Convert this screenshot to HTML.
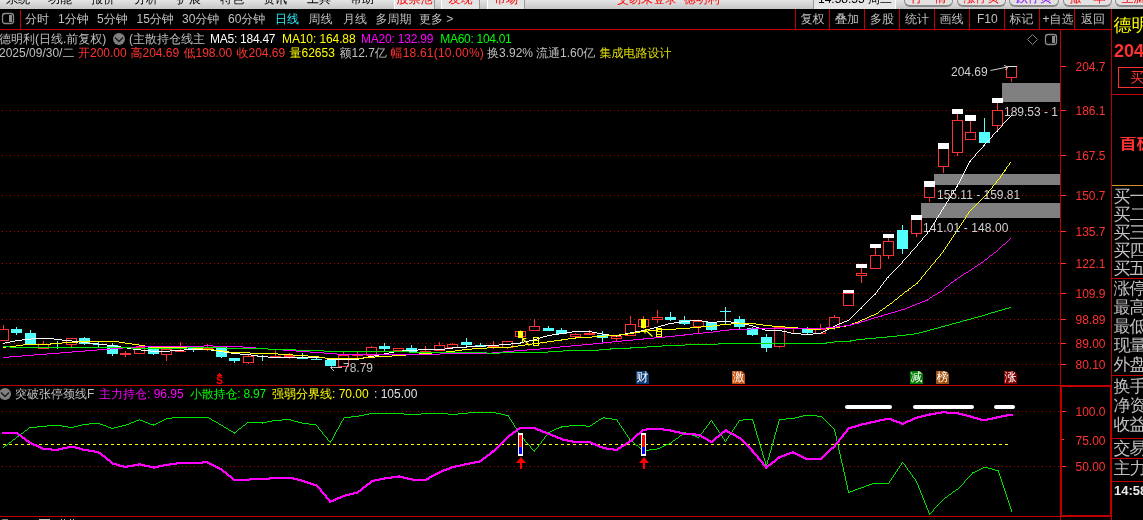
<!DOCTYPE html>
<html lang="zh-CN"><head><meta charset="utf-8"><title>德明利 日线</title>
<style>
html,body{margin:0;padding:0;background:#000;}
body{width:1143px;height:520px;overflow:hidden;position:relative;font-family:"Liberation Sans","WenQuanYi Zen Hei","Noto Sans CJK SC",sans-serif;}
svg{position:absolute;left:0;top:0;}
.txt{position:absolute;left:0;top:0;width:1143px;height:520px;overflow:hidden;will-change:transform;}
.t{position:absolute;white-space:nowrap;line-height:14px;height:14px;letter-spacing:0;}
.menu{position:absolute;left:0;top:0;width:1143px;height:9px;overflow:hidden;background:linear-gradient(#e4e4e4,#c6c6c6);}
.m{position:absolute;top:-8px;font-size:12px;line-height:14px;color:#000;white-space:nowrap;}
.tab{position:absolute;top:-8px;height:17px;box-sizing:border-box;border-left:1px solid #fff;border-right:1px solid #999;background:#e4e4e4;font-size:12px;line-height:14px;color:#f00;text-align:center;white-space:nowrap;}
.clock{position:absolute;top:-8px;height:17px;box-sizing:border-box;border-left:1px solid #999;border-right:1px solid #fff;background:#e6e6e6;font-size:12px;line-height:14px;color:#000;text-align:left;padding-left:4px;white-space:nowrap;}
.btn{position:absolute;top:-12px;height:19px;box-sizing:border-box;border:1px solid #8c8c8c;border-bottom:2px solid #888;border-radius:6px;background:#e2e2e2;font-size:12px;line-height:19px;text-align:center;white-space:nowrap;}
.mk{position:absolute;width:13px;height:13px;clip-path:polygon(0 0,10px 0,13px 3px,13px 13px,0 13px);font-size:12px;line-height:13px;color:#fff;text-align:center;overflow:hidden;}
</style></head><body>
<svg width="1143" height="520" viewBox="0 0 1143 520" shape-rendering="crispEdges">
<line x1="2" y1="110.5" x2="1060" y2="110.5" stroke="#b00000" stroke-width="1" stroke-dasharray="1 3"/>
<line x1="2" y1="155.5" x2="1060" y2="155.5" stroke="#b00000" stroke-width="1" stroke-dasharray="1 3"/>
<line x1="2" y1="195.5" x2="1060" y2="195.5" stroke="#b00000" stroke-width="1" stroke-dasharray="1 3"/>
<line x1="2" y1="231.5" x2="1060" y2="231.5" stroke="#b00000" stroke-width="1" stroke-dasharray="1 3"/>
<line x1="2" y1="263.5" x2="1060" y2="263.5" stroke="#b00000" stroke-width="1" stroke-dasharray="1 3"/>
<line x1="2" y1="293.5" x2="1060" y2="293.5" stroke="#b00000" stroke-width="1" stroke-dasharray="1 3"/>
<line x1="2" y1="319.5" x2="1060" y2="319.5" stroke="#b00000" stroke-width="1" stroke-dasharray="1 3"/>
<line x1="2" y1="343.5" x2="1060" y2="343.5" stroke="#b00000" stroke-width="1" stroke-dasharray="1 3"/>
<line x1="2" y1="364.5" x2="1060" y2="364.5" stroke="#b00000" stroke-width="1" stroke-dasharray="1 3"/>
<line x1="2" y1="411.5" x2="1060" y2="411.5" stroke="#b00000" stroke-width="1" stroke-dasharray="1 3"/>
<line x1="2" y1="466.5" x2="1060" y2="466.5" stroke="#b00000" stroke-width="1" stroke-dasharray="1 3"/>
<rect x="1002" y="83" width="58" height="19" fill="#808080"/>
<rect x="934" y="174" width="126" height="11" fill="#808080"/>
<rect x="921" y="203" width="139" height="15" fill="#808080"/>
<rect x="3" y="325" width="1" height="4" fill="#ff3232"/>
<rect x="-1.5" y="329.5" width="10" height="11" fill="#000" stroke="#ff3232" stroke-width="1"/>
<rect x="16" y="327" width="1" height="8" fill="#54ffff"/>
<rect x="11" y="329" width="11" height="4" fill="#54ffff"/>
<rect x="30" y="330" width="1" height="14" fill="#54ffff"/>
<rect x="25" y="333" width="11" height="11" fill="#54ffff"/>
<rect x="43" y="341" width="1" height="3" fill="#ff3232"/>
<rect x="38.5" y="344.5" width="10" height="4" fill="#000" stroke="#ff3232" stroke-width="1"/>
<rect x="57" y="341" width="1" height="8" fill="#54ffff"/>
<rect x="52" y="347" width="11" height="1" fill="#54ffff"/>
<rect x="71" y="345" width="1" height="2" fill="#ff3232"/>
<rect x="66.5" y="338.5" width="10" height="6" fill="#000" stroke="#ff3232" stroke-width="1"/>
<rect x="84" y="337" width="1" height="8" fill="#54ffff"/>
<rect x="79" y="338" width="11" height="6" fill="#54ffff"/>
<rect x="98" y="342" width="1" height="5" fill="#54ffff"/>
<rect x="93" y="344" width="11" height="1" fill="#54ffff"/>
<rect x="112" y="343" width="1" height="13" fill="#54ffff"/>
<rect x="107" y="345" width="11" height="9" fill="#54ffff"/>
<rect x="125" y="351" width="1" height="6" fill="#ff3232"/>
<rect x="120" y="353" width="11" height="2" fill="#ff3232"/>
<rect x="134.5" y="347.5" width="10" height="6" fill="#000" stroke="#ff3232" stroke-width="1"/>
<rect x="153" y="347" width="1" height="8" fill="#54ffff"/>
<rect x="148" y="347" width="11" height="7" fill="#54ffff"/>
<rect x="166" y="355" width="1" height="6" fill="#ff3232"/>
<rect x="161.5" y="349.5" width="10" height="5" fill="#000" stroke="#ff3232" stroke-width="1"/>
<rect x="180" y="342" width="1" height="10" fill="#ff3232"/>
<rect x="175" y="351" width="11" height="1" fill="#ff3232"/>
<rect x="193" y="346" width="1" height="6" fill="#54ffff"/>
<rect x="188" y="348" width="11" height="1" fill="#54ffff"/>
<rect x="207" y="344" width="1" height="7" fill="#ff3232"/>
<rect x="202" y="348" width="11" height="2" fill="#ff3232"/>
<rect x="221" y="347" width="1" height="11" fill="#54ffff"/>
<rect x="216" y="347" width="11" height="10" fill="#54ffff"/>
<rect x="234" y="358" width="1" height="5" fill="#54ffff"/>
<rect x="229" y="358" width="11" height="3" fill="#54ffff"/>
<rect x="248" y="355" width="1" height="1" fill="#ff3232"/>
<rect x="248" y="363" width="1" height="1" fill="#ff3232"/>
<rect x="243.5" y="356.5" width="10" height="6" fill="#000" stroke="#ff3232" stroke-width="1"/>
<rect x="262" y="355" width="1" height="6" fill="#54ffff"/>
<rect x="257" y="356" width="11" height="1" fill="#54ffff"/>
<rect x="275" y="350" width="1" height="7" fill="#ff3232"/>
<rect x="270" y="356" width="11" height="1" fill="#ff3232"/>
<rect x="289" y="353" width="1" height="6" fill="#ff3232"/>
<rect x="284" y="355" width="11" height="2" fill="#ff3232"/>
<rect x="302" y="353" width="1" height="6" fill="#54ffff"/>
<rect x="297" y="358" width="11" height="1" fill="#54ffff"/>
<rect x="316" y="357" width="1" height="3" fill="#54ffff"/>
<rect x="311" y="359" width="11" height="1" fill="#54ffff"/>
<rect x="330" y="360" width="1" height="6" fill="#54ffff"/>
<rect x="325" y="360" width="11" height="6" fill="#54ffff"/>
<rect x="343" y="352" width="1" height="3" fill="#ff3232"/>
<rect x="338.5" y="355.5" width="10" height="11" fill="#000" stroke="#ff3232" stroke-width="1"/>
<rect x="357" y="352" width="1" height="6" fill="#ff3232"/>
<rect x="352" y="355" width="11" height="1" fill="#ff3232"/>
<rect x="371" y="346" width="1" height="1" fill="#ff3232"/>
<rect x="366.5" y="347.5" width="10" height="8" fill="#000" stroke="#ff3232" stroke-width="1"/>
<rect x="384" y="343" width="1" height="8" fill="#54ffff"/>
<rect x="379" y="346" width="11" height="3" fill="#54ffff"/>
<rect x="393.5" y="348.5" width="10" height="2" fill="#000" stroke="#ff3232" stroke-width="1"/>
<rect x="411" y="345" width="1" height="7" fill="#54ffff"/>
<rect x="406" y="348" width="11" height="4" fill="#54ffff"/>
<rect x="425" y="346" width="1" height="5" fill="#ff3232"/>
<rect x="420.5" y="351.5" width="10" height="2" fill="#000" stroke="#ff3232" stroke-width="1"/>
<rect x="439" y="342" width="1" height="3" fill="#ff3232"/>
<rect x="434.5" y="345.5" width="10" height="5" fill="#000" stroke="#ff3232" stroke-width="1"/>
<rect x="452" y="343" width="1" height="1" fill="#ff3232"/>
<rect x="447.5" y="344.5" width="10" height="3" fill="#000" stroke="#ff3232" stroke-width="1"/>
<rect x="466" y="338" width="1" height="9" fill="#54ffff"/>
<rect x="461" y="342" width="11" height="3" fill="#54ffff"/>
<rect x="480" y="343" width="1" height="4" fill="#54ffff"/>
<rect x="475" y="345" width="11" height="2" fill="#54ffff"/>
<rect x="493" y="341" width="1" height="8" fill="#ff3232"/>
<rect x="488" y="346" width="11" height="1" fill="#ff3232"/>
<rect x="507" y="348" width="1" height="1" fill="#ff3232"/>
<rect x="502.5" y="341.5" width="10" height="6" fill="#000" stroke="#ff3232" stroke-width="1"/>
<rect x="520" y="330" width="1" height="1" fill="#ff3232"/>
<rect x="520" y="337" width="1" height="1" fill="#ff3232"/>
<rect x="515.5" y="331.5" width="10" height="5" fill="#000" stroke="#ff3232" stroke-width="1"/>
<rect x="518" y="331" width="5" height="7" fill="#ffff00"/>
<rect x="534" y="319" width="1" height="7" fill="#ff3232"/>
<rect x="529.5" y="326.5" width="10" height="4" fill="#000" stroke="#ff3232" stroke-width="1"/>
<rect x="548" y="326" width="1" height="5" fill="#54ffff"/>
<rect x="543" y="328" width="11" height="3" fill="#54ffff"/>
<rect x="561" y="328" width="1" height="6" fill="#54ffff"/>
<rect x="556" y="330" width="11" height="4" fill="#54ffff"/>
<rect x="575" y="333" width="1" height="1" fill="#ff3232"/>
<rect x="575" y="337" width="1" height="1" fill="#ff3232"/>
<rect x="570.5" y="334.5" width="10" height="2" fill="#000" stroke="#ff3232" stroke-width="1"/>
<rect x="589" y="330" width="1" height="5" fill="#ff3232"/>
<rect x="584" y="333" width="11" height="2" fill="#ff3232"/>
<rect x="602" y="331" width="1" height="11" fill="#54ffff"/>
<rect x="597" y="335" width="11" height="3" fill="#54ffff"/>
<rect x="616" y="339" width="1" height="2" fill="#ff3232"/>
<rect x="611.5" y="336.5" width="10" height="2" fill="#000" stroke="#ff3232" stroke-width="1"/>
<rect x="630" y="316" width="1" height="8" fill="#ff3232"/>
<rect x="625.5" y="324.5" width="10" height="11" fill="#000" stroke="#ff3232" stroke-width="1"/>
<rect x="643" y="316" width="1" height="3" fill="#ff3232"/>
<rect x="643" y="327" width="1" height="2" fill="#ff3232"/>
<rect x="638.5" y="319.5" width="10" height="7" fill="#000" stroke="#ff3232" stroke-width="1"/>
<rect x="641" y="319" width="5" height="9" fill="#ffff00"/>
<rect x="657" y="310" width="1" height="7" fill="#ff3232"/>
<rect x="657" y="320" width="1" height="3" fill="#ff3232"/>
<rect x="652.5" y="317.5" width="10" height="2" fill="#000" stroke="#ff3232" stroke-width="1"/>
<rect x="670" y="312" width="1" height="9" fill="#54ffff"/>
<rect x="665" y="317" width="11" height="3" fill="#54ffff"/>
<rect x="684" y="316" width="1" height="9" fill="#54ffff"/>
<rect x="679" y="320" width="11" height="4" fill="#54ffff"/>
<rect x="698" y="327" width="1" height="6" fill="#ff3232"/>
<rect x="693.5" y="321.5" width="10" height="5" fill="#000" stroke="#ff3232" stroke-width="1"/>
<rect x="711" y="322" width="1" height="9" fill="#54ffff"/>
<rect x="706" y="322" width="11" height="8" fill="#54ffff"/>
<rect x="725" y="307" width="1" height="17" fill="#54ffff"/>
<rect x="720" y="311" width="11" height="1" fill="#54ffff"/>
<rect x="739" y="316" width="1" height="13" fill="#54ffff"/>
<rect x="734" y="319" width="11" height="8" fill="#54ffff"/>
<rect x="752" y="327" width="1" height="9" fill="#54ffff"/>
<rect x="747" y="328" width="11" height="7" fill="#54ffff"/>
<rect x="766" y="334" width="1" height="18" fill="#54ffff"/>
<rect x="761" y="337" width="11" height="11" fill="#54ffff"/>
<rect x="779" y="347" width="1" height="1" fill="#ff3232"/>
<rect x="774.5" y="327.5" width="10" height="19" fill="#000" stroke="#ff3232" stroke-width="1"/>
<rect x="793" y="328" width="1" height="5" fill="#ff3232"/>
<rect x="788" y="328" width="11" height="1" fill="#ff3232"/>
<rect x="807" y="327" width="1" height="7" fill="#54ffff"/>
<rect x="802" y="329" width="11" height="4" fill="#54ffff"/>
<rect x="820" y="324" width="1" height="5" fill="#ff3232"/>
<rect x="815.5" y="329.5" width="10" height="4" fill="#000" stroke="#ff3232" stroke-width="1"/>
<rect x="834" y="315" width="1" height="2" fill="#ff3232"/>
<rect x="834" y="328" width="1" height="2" fill="#ff3232"/>
<rect x="829.5" y="317.5" width="10" height="10" fill="#000" stroke="#ff3232" stroke-width="1"/>
<rect x="843.5" y="293.5" width="10" height="12" fill="#000" stroke="#ff3232" stroke-width="1"/>
<rect x="843" y="290" width="11" height="3" fill="#fff"/>
<rect x="861" y="268" width="1" height="5" fill="#ff3232"/>
<rect x="861" y="276" width="1" height="7" fill="#ff3232"/>
<rect x="856.5" y="273.5" width="10" height="2" fill="#000" stroke="#ff3232" stroke-width="1"/>
<rect x="856" y="264" width="11" height="4" fill="#fff"/>
<rect x="875" y="248" width="1" height="7" fill="#ff3232"/>
<rect x="870.5" y="255.5" width="10" height="13" fill="#000" stroke="#ff3232" stroke-width="1"/>
<rect x="870" y="244" width="11" height="4" fill="#fff"/>
<rect x="888" y="238" width="1" height="3" fill="#ff3232"/>
<rect x="888" y="256" width="1" height="3" fill="#ff3232"/>
<rect x="883.5" y="241.5" width="10" height="14" fill="#000" stroke="#ff3232" stroke-width="1"/>
<rect x="883" y="234" width="11" height="4" fill="#fff"/>
<rect x="902" y="225" width="1" height="29" fill="#54ffff"/>
<rect x="897" y="230" width="11" height="19" fill="#54ffff"/>
<rect x="916" y="234" width="1" height="3" fill="#ff3232"/>
<rect x="911.5" y="219.5" width="10" height="14" fill="#000" stroke="#ff3232" stroke-width="1"/>
<rect x="911" y="215" width="11" height="5" fill="#fff"/>
<rect x="929" y="198" width="1" height="4" fill="#ff3232"/>
<rect x="924.5" y="186.5" width="10" height="11" fill="#000" stroke="#ff3232" stroke-width="1"/>
<rect x="924" y="181" width="11" height="6" fill="#fff"/>
<rect x="943" y="167" width="1" height="6" fill="#ff3232"/>
<rect x="938.5" y="148.5" width="10" height="18" fill="#000" stroke="#ff3232" stroke-width="1"/>
<rect x="938" y="143" width="11" height="6" fill="#fff"/>
<rect x="957" y="114" width="1" height="6" fill="#ff3232"/>
<rect x="957" y="153" width="1" height="3" fill="#ff3232"/>
<rect x="952.5" y="120.5" width="10" height="32" fill="#000" stroke="#ff3232" stroke-width="1"/>
<rect x="952" y="109" width="11" height="5" fill="#fff"/>
<rect x="970" y="121" width="1" height="11" fill="#ff3232"/>
<rect x="965.5" y="132.5" width="10" height="7" fill="#000" stroke="#ff3232" stroke-width="1"/>
<rect x="965" y="115" width="11" height="6" fill="#fff"/>
<rect x="984" y="118" width="1" height="25" fill="#54ffff"/>
<rect x="979" y="132" width="11" height="11" fill="#54ffff"/>
<rect x="997" y="103" width="1" height="7" fill="#ff3232"/>
<rect x="997" y="126" width="1" height="4" fill="#ff3232"/>
<rect x="992.5" y="110.5" width="10" height="15" fill="#000" stroke="#ff3232" stroke-width="1"/>
<rect x="992" y="98" width="11" height="5" fill="#fff"/>
<rect x="1011" y="78" width="1" height="4" fill="#ff3232"/>
<rect x="1006.5" y="66.5" width="10" height="11" fill="#000" stroke="#ff3232" stroke-width="1"/>
<path d="M3 343h2v1h-2zM5 342h5v1h-5zM10 341h5v1h-5zM15 340h7v1h-7zM22 339h9v1h-9zM31 338h23v1h-23zM54 339h8v1h-8zM62 340h10v1h-10zM72 341h9v1h-9zM81 342h7v1h-7zM88 343h10v1h-10zM98 344h9v1h-9zM107 345h8v1h-8zM115 346h6v1h-6zM121 347h6v1h-6zM127 348h6v1h-6zM133 349h8v1h-8zM141 350h9v1h-9zM150 351h20v1h-20zM170 350h14v1h-14zM184 349h27v1h-27zM211 350h7v1h-7zM218 351h6v1h-6zM224 352h7v1h-7zM231 353h9v1h-9zM240 354h11v1h-11zM251 355h7v1h-7zM258 356h10v1h-10zM268 357h57v1h-57zM325 358h2v1h-2zM327 359h32v1h-32zM359 358h5v1h-5zM363 357h5v1h-5zM368 356h6v1h-6zM374 355h5v1h-5zM379 354h6v1h-6zM384 353h5v1h-5zM389 352h5v1h-5zM394 351h8v1h-8zM402 350h16v1h-16zM418 349h27v1h-27zM445 348h8v1h-8zM452 347h15v1h-15zM466 346h18v1h-18zM484 345h15v1h-15zM499 344h12v1h-12zM511 343h10v1h-10zM520 342h4v1h-4zM524 341h5v1h-5zM529 340h4v1h-4zM533 339h4v1h-4zM537 338h3v1h-3zM540 337h3v1h-3zM543 336h4v1h-4zM547 335h5v1h-5zM552 334h7v1h-7zM559 333h7v1h-7zM566 332h6v1h-6zM572 331h20v1h-20zM592 332h5v1h-5zM597 333h5v1h-5zM602 334h7v1h-7zM609 335h12v1h-12zM616 336h1v1h-1zM621 334h4v1h-4zM625 333h6v1h-6zM630 332h5v1h-5zM635 331h6v1h-6zM641 330h5v1h-5zM646 329h4v1h-4zM650 328h4v1h-4zM654 327h4v1h-4zM658 326h3v1h-3zM661 325h4v1h-4zM665 324h3v1h-3zM668 323h6v1h-6zM674 322h7v1h-7zM681 321h9v1h-9zM690 320h12v1h-12zM702 321h6v1h-6zM708 322h9v1h-9zM717 321h14v1h-14zM731 322h8v1h-8zM739 323h5v1h-5zM744 324h5v1h-5zM749 325h4v1h-4zM753 326h3v1h-3zM756 327h3v1h-3zM759 328h3v1h-3zM762 329h3v1h-3zM765 330h17v1h-17zM782 331h5v1h-5zM787 332h4v1h-4zM791 333h10v1h-10zM801 334h12v1h-12zM813 333h8v1h-8zM821 332h2v1h-2zM823 331h2v1h-2zM825 330h2v1h-2zM827 329h2v1h-2zM829 328h2v1h-2zM831 327h2v1h-2zM833 326h2v1h-2zM835 325h2v1h-2zM837 324h2v1h-2zM839 323h3v1h-3zM842 322h2v1h-2zM844 321h3v1h-3zM847 320h2v1h-2zM849 319h1v1h-1zM850 318h1v1h-1zM851 317h1v1h-1zM852 316h1v1h-1zM853 315h1v1h-1zM854 314h1v1h-1zM855 313h1v1h-1zM856 312h1v1h-1zM857 311h1v1h-1zM858 310h1v1h-1zM859 309h1v1h-1zM860 308h2v1h-2zM861 307h1v1h-1zM862 306h1v1h-1zM863 305h1v1h-1zM864 304h1v1h-1zM865 303h1v1h-1zM866 302h1v1h-1zM867 301h1v1h-1zM868 300h1v1h-1zM869 299h1v1h-1zM870 298h1v1h-1zM871 297h1v1h-1zM872 296h1v1h-1zM873 295h1v1h-1zM874 294h2v1h-2zM875 293h1v1h-1zM876 292h1v1h-1zM877 290h1v2h-1zM878 289h1v1h-1zM879 288h1v1h-1zM880 286h1v2h-1zM881 285h1v1h-1zM882 284h1v1h-1zM883 282h1v2h-1zM884 281h1v1h-1zM885 280h1v1h-1zM886 278h1v2h-1zM887 277h2v1h-2zM888 276h1v1h-1zM889 275h1v1h-1zM890 274h1v1h-1zM891 273h1v1h-1zM892 272h1v1h-1zM893 271h1v1h-1zM894 270h1v1h-1zM895 269h1v1h-1zM896 268h1v1h-1zM897 267h1v1h-1zM898 266h1v1h-1zM899 265h1v1h-1zM900 264h1v1h-1zM901 263h1v1h-1zM902 261h1v2h-1zM903 260h1v1h-1zM904 259h1v1h-1zM905 258h1v1h-1zM906 257h1v1h-1zM907 256h1v1h-1zM908 255h1v1h-1zM909 254h1v1h-1zM910 252h1v2h-1zM911 251h1v1h-1zM912 250h1v1h-1zM913 249h1v1h-1zM914 248h1v1h-1zM915 247h1v1h-1zM916 246h1v1h-1zM917 244h1v2h-1zM918 243h1v1h-1zM919 242h1v1h-1zM920 241h1v1h-1zM921 240h1v1h-1zM922 238h1v2h-1zM923 237h1v1h-1zM924 236h1v1h-1zM925 235h1v1h-1zM926 234h1v1h-1zM927 232h1v2h-1zM928 231h2v1h-2zM929 230h1v1h-1zM930 228h1v2h-1zM931 226h1v2h-1zM932 225h1v1h-1zM933 223h1v2h-1zM934 222h1v1h-1zM935 220h1v2h-1zM936 218h1v2h-1zM937 217h1v1h-1zM938 215h1v2h-1zM939 214h1v1h-1zM940 212h1v2h-1zM941 210h1v2h-1zM942 209h1v1h-1zM943 207h1v2h-1zM944 206h1v1h-1zM945 204h1v2h-1zM946 202h1v2h-1zM947 201h1v1h-1zM948 199h1v2h-1zM949 198h1v1h-1zM950 196h1v2h-1zM951 194h1v2h-1zM952 193h1v1h-1zM953 191h1v2h-1zM954 190h1v1h-1zM955 188h1v2h-1zM956 187h1v1h-1zM956 186h2v1h-2zM957 184h1v2h-1zM958 183h1v1h-1zM959 181h1v2h-1zM960 179h1v2h-1zM961 177h1v2h-1zM962 175h1v2h-1zM963 173h1v2h-1zM964 171h1v2h-1zM965 169h1v2h-1zM966 167h1v2h-1zM967 165h1v2h-1zM968 163h1v2h-1zM969 162h1v1h-1zM969 161h2v1h-2zM970 160h1v1h-1zM971 159h1v1h-1zM972 158h1v1h-1zM973 157h1v1h-1zM974 156h1v1h-1zM975 154h1v2h-1zM976 153h1v1h-1zM977 152h1v1h-1zM978 151h1v1h-1zM979 150h1v1h-1zM980 149h1v1h-1zM981 148h1v1h-1zM982 147h1v1h-1zM983 146h1v1h-1zM983 145h2v1h-2zM984 144h1v1h-1zM985 143h1v1h-1zM986 142h1v1h-1zM987 141h1v1h-1zM988 140h1v1h-1zM989 139h1v1h-1zM990 138h1v1h-1zM991 137h1v1h-1zM992 135h1v2h-1zM993 134h1v1h-1zM994 133h1v1h-1zM995 132h1v1h-1zM996 131h2v1h-2zM997 130h1v1h-1zM998 129h1v1h-1zM999 128h1v1h-1zM1000 127h1v1h-1zM1001 126h1v1h-1zM1002 124h1v2h-1zM1003 123h1v1h-1zM1004 122h1v1h-1zM1005 121h1v1h-1zM1006 120h1v1h-1zM1007 119h1v1h-1zM1008 118h1v1h-1zM1009 117h1v1h-1zM1010 116h1v1h-1zM1011 115h1v1h-1z" fill="#ffffff"/>
<path d="M3 347h3v1h-3zM6 346h10v1h-10zM16 345h7v1h-7zM23 344h28v1h-28zM50 343h12v1h-12zM62 342h16v1h-16zM78 341h41v1h-41zM119 342h6v1h-6zM125 343h7v1h-7zM132 344h7v1h-7zM139 345h6v1h-6zM145 346h5v1h-5zM150 347h43v1h-43zM193 348h10v1h-10zM203 349h11v1h-11zM214 350h9v1h-9zM223 351h6v1h-6zM229 352h21v1h-21zM250 353h28v1h-28zM278 354h15v1h-15zM293 355h15v1h-15zM308 356h11v1h-11zM319 357h6v1h-6zM325 358h38v1h-38zM363 357h12v1h-12zM375 356h17v1h-17zM392 355h14v1h-14zM406 354h13v1h-13zM419 353h13v1h-13zM432 352h14v1h-14zM446 351h9v1h-9zM455 350h7v1h-7zM462 349h10v1h-10zM472 348h15v1h-15zM487 347h24v1h-24zM511 346h7v1h-7zM518 345h7v1h-7zM525 344h7v1h-7zM532 343h8v1h-8zM540 342h7v1h-7zM547 341h7v1h-7zM554 340h8v1h-8zM561 339h7v1h-7zM568 338h8v1h-8zM575 337h17v1h-17zM592 336h14v1h-14zM606 335h13v1h-13zM619 334h9v1h-9zM628 333h6v1h-6zM634 332h6v1h-6zM640 331h8v1h-8zM648 330h10v1h-10zM657 329h19v1h-19zM676 328h14v1h-14zM690 327h11v1h-11zM701 326h12v1h-12zM713 325h7v1h-7zM720 324h11v1h-11zM731 323h25v1h-25zM756 324h7v1h-7zM763 325h9v1h-9zM772 326h13v1h-13zM785 327h13v1h-13zM798 328h9v1h-9zM807 329h14v1h-14zM820 328h15v1h-15zM834 327h6v1h-6zM840 326h6v1h-6zM846 325h4v1h-4zM850 324h2v1h-2zM852 323h3v1h-3zM855 322h3v1h-3zM858 321h2v1h-2zM860 320h2v1h-2zM862 319h3v1h-3zM865 318h2v1h-2zM867 317h2v1h-2zM869 316h2v1h-2zM871 315h3v1h-3zM874 314h2v1h-2zM876 313h2v1h-2zM878 312h1v1h-1zM879 311h1v1h-1zM880 310h2v1h-2zM882 309h1v1h-1zM883 308h2v1h-2zM885 307h1v1h-1zM886 306h1v1h-1zM887 305h2v1h-2zM889 304h1v1h-1zM890 303h2v1h-2zM892 302h1v1h-1zM893 301h1v1h-1zM894 300h1v1h-1zM895 299h2v1h-2zM897 298h1v1h-1zM898 297h1v1h-1zM899 296h1v1h-1zM900 295h2v1h-2zM902 294h1v1h-1zM903 293h1v1h-1zM904 292h1v1h-1zM905 291h2v1h-2zM907 290h2v1h-2zM908 289h1v1h-1zM909 288h2v1h-2zM911 287h1v1h-1zM912 286h1v1h-1zM913 285h2v1h-2zM915 284h1v1h-1zM916 283h2v1h-2zM917 282h1v1h-1zM918 281h1v1h-1zM919 280h1v1h-1zM920 279h1v1h-1zM921 277h1v2h-1zM922 276h1v1h-1zM923 275h1v1h-1zM924 274h1v1h-1zM925 272h1v2h-1zM926 271h1v1h-1zM927 270h1v1h-1zM928 269h1v1h-1zM929 268h1v1h-1zM930 266h1v2h-1zM931 265h1v1h-1zM932 264h1v1h-1zM933 263h1v1h-1zM934 262h1v1h-1zM935 260h1v2h-1zM936 259h1v1h-1zM937 258h1v1h-1zM938 257h1v1h-1zM939 256h1v1h-1zM940 254h1v2h-1zM941 253h1v1h-1zM942 252h1v1h-1zM943 250h1v2h-1zM944 249h1v1h-1zM945 247h1v2h-1zM946 246h1v1h-1zM947 244h1v2h-1zM948 243h1v1h-1zM949 241h1v2h-1zM950 240h1v1h-1zM951 238h1v2h-1zM952 237h1v1h-1zM953 235h1v2h-1zM954 234h1v1h-1zM955 232h1v2h-1zM956 231h1v1h-1zM957 229h1v2h-1zM958 228h1v1h-1zM959 226h1v2h-1zM960 225h1v1h-1zM961 223h1v2h-1zM962 222h1v1h-1zM963 220h1v2h-1zM964 219h1v1h-1zM965 217h1v2h-1zM966 215h1v2h-1zM967 214h1v1h-1zM968 212h1v2h-1zM969 211h1v1h-1zM970 210h1v1h-1zM971 209h1v1h-1zM972 208h1v1h-1zM973 207h1v1h-1zM974 206h1v1h-1zM975 205h1v1h-1zM976 204h1v1h-1zM977 203h1v1h-1zM978 202h1v1h-1zM979 201h1v1h-1zM980 200h1v1h-1zM981 199h1v1h-1zM982 198h1v1h-1zM983 197h1v1h-1zM984 196h1v1h-1zM985 195h2v1h-2zM986 194h1v1h-1zM987 193h1v1h-1zM988 191h1v2h-1zM989 190h1v1h-1zM990 189h1v1h-1zM991 188h1v1h-1zM992 186h1v2h-1zM993 185h1v1h-1zM994 184h1v1h-1zM995 183h1v1h-1zM996 181h1v2h-1zM997 180h1v1h-1zM998 179h1v1h-1zM999 178h1v1h-1zM1000 176h1v2h-1zM1001 175h1v1h-1zM1002 173h1v2h-1zM1003 172h1v1h-1zM1004 171h1v1h-1zM1004 170h2v1h-2zM1005 169h1v1h-1zM1006 167h1v2h-1zM1007 166h1v1h-1zM1008 165h1v1h-1zM1009 163h1v2h-1zM1010 162h1v1h-1z" fill="#ffff00"/>
<path d="M3 357h6v1h-6zM9 356h13v1h-13zM22 355h12v1h-12zM34 354h13v1h-13zM47 353h13v1h-13zM60 352h12v1h-12zM72 351h13v1h-13zM85 350h12v1h-12zM97 349h13v1h-13zM110 348h13v1h-13zM123 347h13v1h-13zM136 346h68v1h-68zM204 345h9v1h-9zM213 346h30v1h-30zM243 347h13v1h-13zM256 348h12v1h-12zM268 349h15v1h-15zM283 350h13v1h-13zM296 351h14v1h-14zM310 352h14v1h-14zM324 353h13v1h-13zM337 354h103v1h-103zM440 353h52v1h-52zM492 352h11v1h-11zM503 351h11v1h-11zM514 350h13v1h-13zM527 349h13v1h-13zM540 348h11v1h-11zM551 347h9v1h-9zM560 346h11v1h-11zM571 345h11v1h-11zM582 344h11v1h-11zM593 343h10v1h-10zM602 342h10v1h-10zM612 341h10v1h-10zM622 340h11v1h-11zM633 339h11v1h-11zM643 338h11v1h-11zM654 337h11v1h-11zM665 336h10v1h-10zM675 335h10v1h-10zM684 334h9v1h-9zM693 333h10v1h-10zM703 332h10v1h-10zM713 331h7v1h-7zM720 330h9v1h-9zM729 329h22v1h-22zM751 328h75v1h-75zM826 327h10v1h-10zM836 326h8v1h-8zM844 325h7v1h-7zM850 324h4v1h-4zM854 323h5v1h-5zM858 322h3v1h-3zM861 321h4v1h-4zM865 320h3v1h-3zM868 319h3v1h-3zM871 318h3v1h-3zM874 317h4v1h-4zM878 316h4v1h-4zM881 315h3v1h-3zM884 314h4v1h-4zM888 313h3v1h-3zM891 312h4v1h-4zM895 311h3v1h-3zM898 310h3v1h-3zM901 309h4v1h-4zM905 308h2v1h-2zM907 307h3v1h-3zM910 306h2v1h-2zM912 305h3v1h-3zM915 304h2v1h-2zM917 303h3v1h-3zM920 302h2v1h-2zM922 301h3v1h-3zM925 300h3v1h-3zM927 299h2v1h-2zM929 298h1v1h-1zM930 297h2v1h-2zM932 296h1v1h-1zM933 295h2v1h-2zM935 294h2v1h-2zM937 293h1v1h-1zM938 292h2v1h-2zM940 291h2v1h-2zM942 290h1v1h-1zM943 289h1v1h-1zM944 288h1v1h-1zM945 287h1v1h-1zM946 286h2v1h-2zM948 285h1v1h-1zM949 284h1v1h-1zM950 283h1v1h-1zM951 282h2v1h-2zM953 281h1v1h-1zM954 280h2v1h-2zM955 279h2v1h-2zM957 278h1v1h-1zM958 277h2v1h-2zM960 276h1v1h-1zM961 275h2v1h-2zM963 274h1v1h-1zM964 273h2v1h-2zM966 272h2v1h-2zM968 271h1v1h-1zM969 270h2v1h-2zM971 269h1v1h-1zM972 268h2v1h-2zM974 267h1v1h-1zM975 266h2v1h-2zM977 265h1v1h-1zM978 264h2v1h-2zM980 263h1v1h-1zM981 262h2v1h-2zM983 261h1v1h-1zM984 260h1v1h-1zM985 259h2v1h-2zM987 258h1v1h-1zM988 257h1v1h-1zM989 256h1v1h-1zM990 255h2v1h-2zM992 254h1v1h-1zM993 253h1v1h-1zM994 252h2v1h-2zM996 251h1v1h-1zM997 250h1v1h-1zM998 249h1v1h-1zM999 248h1v1h-1zM1000 247h1v1h-1zM1001 246h1v1h-1zM1002 245h1v1h-1zM1003 244h2v1h-2zM1005 243h1v1h-1zM1006 242h1v1h-1zM1007 241h1v1h-1zM1008 240h1v1h-1zM1009 239h1v1h-1zM1010 238h1v1h-1z" fill="#ff00ff"/>
<path d="M3 346h7v1h-7zM10 347h121v1h-121zM131 348h56v1h-56zM187 347h39v1h-39zM226 348h42v1h-42zM268 349h28v1h-28zM296 350h28v1h-28zM324 351h85v1h-85zM409 352h78v1h-78zM487 353h13v1h-13zM500 352h48v1h-48zM548 351h15v1h-15zM563 350h36v1h-36zM599 349h12v1h-12zM610 348h21v1h-21zM630 347h17v1h-17zM647 346h15v1h-15zM662 345h23v1h-23zM685 344h33v1h-33zM718 343h109v1h-109zM826 342h8v1h-8zM834 341h17v1h-17zM850 340h6v1h-6zM856 339h9v1h-9zM865 338h11v1h-11zM876 337h11v1h-11zM887 336h10v1h-10zM897 335h9v1h-9zM906 334h8v1h-8zM914 333h5v1h-5zM919 332h4v1h-4zM923 331h4v1h-4zM927 330h3v1h-3zM930 329h4v1h-4zM934 328h4v1h-4zM938 327h3v1h-3zM941 326h4v1h-4zM945 325h4v1h-4zM949 324h3v1h-3zM952 323h4v1h-4zM956 322h4v1h-4zM960 321h3v1h-3zM963 320h4v1h-4zM967 319h4v1h-4zM971 318h3v1h-3zM974 317h4v1h-4zM978 316h4v1h-4zM982 315h3v1h-3zM985 314h3v1h-3zM988 313h3v1h-3zM991 312h4v1h-4zM995 311h3v1h-3zM998 310h4v1h-4zM1002 309h3v1h-3zM1005 308h4v1h-4zM1009 307h2v1h-2z" fill="#00e600"/>
<path d="M522.5 338.5L529.5 345.5M522.5 338.5l4 0M522.5 338.5l0 4" stroke="#ffff00" stroke-width="1.2" fill="none" shape-rendering="auto"/>
<rect x="533.5" y="337.5" width="5" height="8" fill="none" stroke="#ffff00"/>
<path d="M534 340.5h5M534 343.5h5" stroke="#ffff00"/>
<path d="M645.0 329.5L652.5 336.5M645.0 329.5l4 0M645.0 329.5l0 4" stroke="#ffff00" stroke-width="1.2" fill="none" shape-rendering="auto"/>
<rect x="656.5" y="328.5" width="5" height="8" fill="none" stroke="#ffff00"/>
<path d="M657 331.5h5M657 334.5h5" stroke="#ffff00"/>
<path d="M990.5 70.5L1007.5 67M1004 65.5l4 1.5l-2.5 3" stroke="#d0d0d0" fill="none" shape-rendering="auto"/>
<rect x="1008" y="66" width="9" height="1" fill="#e0e0e0"/>
<path d="M330.5 367.5H342M332.5 365.5l-2 2l3.5 3.5" stroke="#c0c0c0" fill="none" shape-rendering="auto"/>
<line x1="3" y1="444.5" x2="1010" y2="444.5" stroke="#ffff00" stroke-width="1" stroke-dasharray="3 3"/>
<path d="M3 447h1v1h-1zM4 446h1v1h-1zM5 445h2v1h-2zM7 444h1v1h-1zM8 443h1v1h-1zM9 442h2v1h-2zM11 441h1v1h-1zM12 440h1v1h-1zM13 439h2v1h-2zM15 438h1v1h-1zM16 437h1v1h-1zM17 436h2v1h-2zM19 435h1v1h-1zM20 434h1v1h-1zM21 433h2v1h-2zM23 432h1v1h-1zM24 431h1v1h-1zM25 430h2v1h-2zM27 429h1v1h-1zM28 428h1v1h-1zM29 427h8v1h-8zM37 426h10v1h-10zM47 425h15v1h-15zM62 426h6v1h-6zM68 427h6v1h-6zM74 426h4v1h-4zM78 425h4v1h-4zM82 424h7v1h-7zM89 423h11v1h-11zM100 424h3v1h-3zM103 425h3v1h-3zM106 426h2v1h-2zM108 427h3v1h-3zM111 428h3v1h-3zM114 427h4v1h-4zM118 426h4v1h-4zM122 425h4v1h-4zM126 424h3v1h-3zM129 423h2v1h-2zM131 422h3v1h-3zM134 421h2v1h-2zM136 420h3v1h-3zM139 419h1v1h-1zM140 420h3v1h-3zM143 421h2v1h-2zM145 422h3v1h-3zM148 423h2v1h-2zM150 424h6v1h-6zM153 425h1v1h-1zM156 423h2v1h-2zM158 422h2v1h-2zM160 421h2v1h-2zM162 420h2v1h-2zM164 419h2v1h-2zM166 418h6v1h-6zM172 417h37v1h-37zM209 418h2v1h-2zM211 419h1v1h-1zM212 420h2v1h-2zM214 421h2v1h-2zM216 422h2v1h-2zM218 423h1v1h-1zM219 424h2v1h-2zM221 425h2v1h-2zM223 426h1v1h-1zM224 427h2v1h-2zM226 428h2v1h-2zM228 429h1v1h-1zM229 430h2v1h-2zM231 431h2v1h-2zM233 432h3v1h-3zM234 433h1v1h-1zM236 431h1v1h-1zM237 430h1v1h-1zM238 429h1v1h-1zM239 428h2v1h-2zM241 427h1v1h-1zM242 426h1v1h-1zM243 425h2v1h-2zM245 424h1v1h-1zM246 423h1v1h-1zM247 422h20v1h-20zM262 423h1v1h-1zM267 421h5v1h-5zM272 420h10v1h-10zM282 419h9v1h-9zM291 420h3v1h-3zM294 421h4v1h-4zM298 422h4v1h-4zM302 423h7v1h-7zM309 424h7v1h-7zM316 425h1v1h-1zM317 426h1v1h-1zM318 427h1v2h-1zM319 429h1v1h-1zM320 430h1v1h-1zM321 431h1v1h-1zM322 432h1v2h-1zM323 434h1v1h-1zM324 435h1v1h-1zM325 436h1v1h-1zM326 437h1v1h-1zM327 438h1v2h-1zM328 440h1v1h-1zM329 441h2v1h-2zM330 442h1v1h-1zM331 440h1v1h-1zM332 438h1v2h-1zM333 436h1v2h-1zM334 434h1v2h-1zM335 432h1v2h-1zM336 430h1v2h-1zM337 429h1v1h-1zM338 427h1v2h-1zM339 425h1v2h-1zM340 423h1v2h-1zM341 421h1v2h-1zM342 420h1v1h-1zM343 418h1v2h-1zM344 417h7v1h-7zM351 416h8v1h-8zM359 415h5v1h-5zM364 414h5v1h-5zM369 413h35v1h-35zM404 414h17v1h-17zM421 413h27v1h-27zM448 414h10v1h-10zM458 413h10v1h-10zM468 412h28v1h-28zM496 413h5v1h-5zM501 414h4v1h-4zM505 415h4v1h-4zM508 416h1v1h-1zM509 417h1v2h-1zM510 419h1v1h-1zM511 420h1v2h-1zM512 422h1v1h-1zM513 423h1v2h-1zM514 425h1v2h-1zM515 427h1v1h-1zM516 428h1v2h-1zM517 430h1v2h-1zM518 432h1v1h-1zM519 433h1v2h-1zM520 435h1v1h-1zM521 436h1v1h-1zM522 437h1v1h-1zM523 438h1v1h-1zM524 439h1v2h-1zM525 441h1v1h-1zM526 442h1v1h-1zM527 443h1v1h-1zM528 444h1v1h-1zM529 445h1v1h-1zM530 446h1v2h-1zM531 448h1v1h-1zM532 449h1v1h-1zM533 450h2v1h-2zM534 451h1v1h-1zM535 449h1v1h-1zM536 448h1v1h-1zM537 447h1v1h-1zM538 445h1v2h-1zM539 444h1v1h-1zM540 443h1v1h-1zM541 441h1v2h-1zM542 440h1v1h-1zM543 439h1v1h-1zM544 437h1v2h-1zM545 436h1v1h-1zM546 435h1v1h-1zM547 433h1v2h-1zM548 432h2v1h-2zM550 431h2v1h-2zM552 430h2v1h-2zM554 429h2v1h-2zM556 428h3v1h-3zM559 427h3v1h-3zM561 426h8v1h-8zM569 425h17v1h-17zM586 426h4v1h-4zM590 425h2v1h-2zM592 424h1v1h-1zM593 423h2v1h-2zM595 422h1v1h-1zM596 421h2v1h-2zM598 420h1v1h-1zM599 419h2v1h-2zM601 418h2v1h-2zM603 417h2v1h-2zM605 418h7v1h-7zM612 419h5v1h-5zM617 420h1v2h-1zM618 422h1v1h-1zM619 423h1v2h-1zM620 425h1v1h-1zM621 426h1v2h-1zM622 428h1v1h-1zM623 429h1v2h-1zM624 431h1v1h-1zM625 432h1v2h-1zM626 434h1v1h-1zM627 435h1v2h-1zM628 437h1v1h-1zM629 438h1v2h-1zM630 440h1v1h-1zM631 441h2v1h-2zM633 442h1v1h-1zM634 443h1v1h-1zM635 444h1v1h-1zM636 445h2v1h-2zM638 446h1v1h-1zM639 447h1v1h-1zM640 448h1v1h-1zM641 449h2v1h-2zM643 450h6v1h-6zM649 449h8v1h-8zM657 448h3v1h-3zM660 447h2v1h-2zM662 446h2v1h-2zM664 445h2v1h-2zM666 444h3v1h-3zM669 443h2v1h-2zM671 442h1v1h-1zM672 441h1v1h-1zM673 440h2v1h-2zM675 439h1v1h-1zM676 438h2v1h-2zM678 437h1v1h-1zM679 436h1v1h-1zM680 435h2v1h-2zM682 434h1v1h-1zM683 433h1v1h-1zM684 432h2v1h-2zM686 433h3v1h-3zM689 434h3v1h-3zM692 435h3v1h-3zM695 436h2v1h-2zM697 437h2v1h-2zM699 436h1v1h-1zM700 434h1v2h-1zM701 433h1v1h-1zM702 432h1v1h-1zM703 430h1v2h-1zM704 429h1v1h-1zM705 428h1v1h-1zM706 426h1v2h-1zM707 425h1v1h-1zM708 424h1v1h-1zM709 422h1v2h-1zM710 421h1v1h-1zM711 420h1v1h-1zM712 421h1v2h-1zM713 423h1v1h-1zM714 424h1v2h-1zM715 426h1v1h-1zM716 427h1v2h-1zM717 429h1v1h-1zM718 430h1v2h-1zM719 432h1v1h-1zM720 433h1v2h-1zM721 435h1v1h-1zM722 436h1v2h-1zM723 438h1v1h-1zM724 439h1v2h-1zM725 441h1v1h-1zM726 439h1v2h-1zM727 438h1v1h-1zM728 436h1v2h-1zM729 435h1v1h-1zM730 433h1v2h-1zM731 432h1v1h-1zM732 430h1v2h-1zM733 429h1v1h-1zM734 427h1v2h-1zM735 426h1v1h-1zM736 424h1v2h-1zM737 423h1v1h-1zM738 421h1v2h-1zM739 420h4v1h-4zM743 419h10v1h-10zM752 420h1v1h-1zM753 421h1v3h-1zM754 424h1v4h-1zM755 428h1v3h-1zM756 431h1v4h-1zM757 435h1v3h-1zM758 438h1v3h-1zM759 441h1v4h-1zM760 445h1v3h-1zM761 448h1v3h-1zM762 451h1v4h-1zM763 455h1v3h-1zM764 458h1v3h-1zM765 461h1v3h-1zM765 464h2v1h-2zM766 465h1v2h-1zM767 460h1v4h-1zM768 457h1v3h-1zM769 453h1v4h-1zM770 450h1v3h-1zM771 446h1v4h-1zM772 443h1v3h-1zM773 439h1v4h-1zM774 435h1v4h-1zM775 432h1v3h-1zM776 428h1v4h-1zM777 425h1v3h-1zM778 421h1v4h-1zM779 420h1v1h-1zM779 419h7v1h-7zM786 418h9v1h-9zM795 417h4v1h-4zM799 416h4v1h-4zM803 415h14v1h-14zM817 416h5v1h-5zM822 417h1v1h-1zM823 418h1v1h-1zM824 419h1v1h-1zM825 420h1v1h-1zM826 421h1v1h-1zM827 422h1v1h-1zM828 423h1v1h-1zM829 424h1v1h-1zM830 425h1v1h-1zM831 426h1v1h-1zM832 427h1v1h-1zM833 428h1v1h-1zM834 429h1v3h-1zM835 432h1v4h-1zM836 436h1v5h-1zM837 441h1v4h-1zM838 445h1v5h-1zM839 450h1v4h-1zM840 454h1v5h-1zM841 459h1v4h-1zM842 463h1v4h-1zM843 467h1v5h-1zM844 472h1v4h-1zM845 476h1v5h-1zM846 481h1v4h-1zM847 485h1v5h-1zM848 490h1v2h-1zM848 492h2v1h-2zM850 491h3v1h-3zM853 490h2v1h-2zM855 489h3v1h-3zM858 488h3v1h-3zM861 487h3v1h-3zM864 486h2v1h-2zM866 485h3v1h-3zM869 484h3v1h-3zM872 483h17v1h-17zM889 481h1v2h-1zM890 480h1v1h-1zM891 478h1v2h-1zM892 477h1v1h-1zM893 475h1v2h-1zM894 474h1v1h-1zM895 472h1v2h-1zM896 471h1v1h-1zM897 469h1v2h-1zM898 468h1v1h-1zM899 466h1v2h-1zM900 465h1v1h-1zM901 463h1v2h-1zM902 462h1v1h-1zM903 463h1v1h-1zM904 464h1v1h-1zM905 465h1v2h-1zM906 467h1v1h-1zM907 468h1v2h-1zM908 470h1v1h-1zM909 471h1v1h-1zM910 472h1v2h-1zM911 474h1v1h-1zM912 475h1v2h-1zM913 477h1v1h-1zM914 478h1v1h-1zM915 479h1v2h-1zM916 481h1v2h-1zM917 483h1v2h-1zM918 485h1v3h-1zM919 488h1v2h-1zM920 490h1v3h-1zM921 493h1v2h-1zM922 495h1v3h-1zM923 498h1v2h-1zM924 500h1v3h-1zM925 503h1v2h-1zM926 505h1v3h-1zM927 508h1v2h-1zM928 510h1v3h-1zM929 514h1v1h-1zM929 513h2v1h-2zM931 512h1v1h-1zM932 511h1v1h-1zM933 509h1v2h-1zM934 508h1v1h-1zM935 507h1v1h-1zM936 506h1v1h-1zM937 505h1v1h-1zM938 504h1v1h-1zM939 503h1v1h-1zM940 502h1v1h-1zM941 501h1v1h-1zM942 500h1v1h-1zM943 499h1v1h-1zM944 498h1v1h-1zM945 497h2v1h-2zM947 496h1v1h-1zM948 495h1v1h-1zM949 494h2v1h-2zM951 493h1v1h-1zM952 492h1v1h-1zM953 491h2v1h-2zM955 490h1v1h-1zM956 489h2v1h-2zM958 488h1v1h-1zM959 487h1v1h-1zM960 486h1v1h-1zM961 485h1v1h-1zM962 484h1v1h-1zM963 483h1v1h-1zM964 481h1v2h-1zM965 480h1v1h-1zM966 479h1v1h-1zM967 478h1v1h-1zM968 477h1v1h-1zM969 476h1v1h-1zM970 475h1v1h-1zM971 474h1v1h-1zM972 473h1v1h-1zM972 472h3v1h-3zM975 471h2v1h-2zM977 470h2v1h-2zM979 469h2v1h-2zM981 468h2v1h-2zM983 467h5v1h-5zM988 468h4v1h-4zM992 469h3v1h-3zM995 470h4v1h-4zM998 471h1v2h-1zM999 473h1v3h-1zM1000 476h1v3h-1zM1001 479h1v3h-1zM1002 482h1v3h-1zM1003 485h1v3h-1zM1004 488h1v3h-1zM1005 491h1v3h-1zM1006 494h1v3h-1zM1007 497h1v3h-1zM1008 500h1v3h-1zM1009 503h1v3h-1zM1010 506h1v3h-1zM1011 509h1v3h-1z" fill="#00e600"/>
<path d="M2 432h16v1h-16zM2 433h17v1h-17zM17 434h4v1h-4zM18 435h4v1h-4zM20 436h3v1h-3zM21 437h4v1h-4zM22 438h4v1h-4zM24 439h3v1h-3zM25 440h4v1h-4zM26 441h4v1h-4zM28 442h4v1h-4zM29 443h5v1h-5zM31 444h6v1h-6zM33 445h6v1h-6zM36 446h5v1h-5zM38 447h5v1h-5zM40 448h12v1h-12zM42 449h21v1h-21zM51 450h8v1h-8zM58 448h10v1h-10zM62 447h18v1h-18zM67 446h9v1h-9zM75 448h8v1h-8zM79 449h10v1h-10zM82 450h13v1h-13zM88 451h11v1h-11zM94 452h7v1h-7zM98 453h4v1h-4zM100 454h3v1h-3zM101 455h4v1h-4zM102 456h4v1h-4zM104 457h3v1h-3zM105 458h3v1h-3zM106 459h4v1h-4zM107 460h4v1h-4zM109 461h3v1h-3zM110 462h3v1h-3zM111 463h6v1h-6zM112 464h8v1h-8zM116 465h8v1h-8zM119 466h15v1h-15zM123 467h5v1h-5zM127 465h12v1h-12zM133 464h12v1h-12zM138 463h3v1h-3zM140 465h10v1h-10zM144 466h20v1h-20zM149 467h10v1h-10zM153 468h2v1h-2zM158 465h12v1h-12zM163 464h14v1h-14zM169 463h34v1h-34zM176 462h34v1h-34zM202 461h6v1h-6zM207 463h5v1h-5zM209 464h5v1h-5zM211 465h5v1h-5zM213 466h5v1h-5zM215 467h5v1h-5zM217 468h5v1h-5zM219 469h4v1h-4zM221 470h3v1h-3zM222 471h4v1h-4zM223 472h4v1h-4zM225 473h3v1h-3zM226 474h3v1h-3zM227 475h4v1h-4zM228 476h4v1h-4zM230 477h3v1h-3zM231 478h3v1h-3zM232 479h38v1h-38zM233 480h17v1h-17zM249 478h49v1h-49zM269 477h25v1h-25zM293 479h9v1h-9zM297 480h8v1h-8zM301 481h7v1h-7zM304 482h7v1h-7zM307 483h7v1h-7zM310 484h7v1h-7zM313 485h5v1h-5zM316 486h3v1h-3zM317 487h3v1h-3zM318 488h3v1h-3zM319 489h3v1h-3zM320 490h2v1h-2zM320 491h3v1h-3zM321 492h3v1h-3zM322 493h3v1h-3zM323 494h3v1h-3zM324 495h3v1h-3zM325 496h2v1h-2zM325 497h3v1h-3zM326 498h3v1h-3zM327 499h3v1h-3zM328 500h8v1h-8zM329 502h2v1h-2zM329 501h5v1h-5zM333 499h5v1h-5zM335 498h6v1h-6zM337 497h6v1h-6zM340 496h6v1h-6zM342 495h8v1h-8zM345 494h9v1h-9zM349 493h9v1h-9zM353 492h6v1h-6zM357 491h4v1h-4zM358 490h4v1h-4zM360 489h3v1h-3zM361 488h3v1h-3zM362 487h4v1h-4zM363 486h4v1h-4zM365 485h3v1h-3zM366 484h4v1h-4zM367 483h4v1h-4zM369 482h3v1h-3zM370 481h5v1h-5zM371 480h9v1h-9zM374 479h11v1h-11zM379 478h13v1h-13zM384 477h24v1h-24zM391 476h13v1h-13zM398 475h2v1h-2zM403 478h10v1h-10zM407 479h22v1h-22zM412 480h15v1h-15zM426 478h4v1h-4zM428 477h4v1h-4zM429 476h5v1h-5zM431 475h5v1h-5zM433 474h5v1h-5zM435 473h5v1h-5zM437 472h5v1h-5zM439 471h5v1h-5zM441 470h6v1h-6zM443 469h7v1h-7zM446 468h6v1h-6zM449 467h7v1h-7zM451 466h10v1h-10zM455 465h10v1h-10zM460 464h10v1h-10zM464 463h11v1h-11zM469 462h11v1h-11zM474 461h8v1h-8zM479 460h4v1h-4zM481 459h3v1h-3zM482 458h4v1h-4zM483 457h4v1h-4zM485 456h3v1h-3zM486 455h4v1h-4zM487 454h4v1h-4zM489 453h3v1h-3zM490 452h4v1h-4zM491 451h4v1h-4zM492 450h4v1h-4zM494 449h3v1h-3zM495 448h3v1h-3zM496 447h3v1h-3zM497 446h3v1h-3zM498 445h3v1h-3zM499 444h3v1h-3zM500 443h3v1h-3zM501 442h3v1h-3zM502 441h3v1h-3zM503 440h3v1h-3zM504 439h3v1h-3zM505 438h3v1h-3zM506 437h3v1h-3zM507 436h3v1h-3zM508 435h4v1h-4zM509 434h4v1h-4zM511 433h3v1h-3zM512 432h4v1h-4zM513 431h4v1h-4zM515 430h3v1h-3zM516 429h4v1h-4zM517 428h21v1h-21zM519 427h17v1h-17zM535 429h6v1h-6zM537 430h6v1h-6zM540 431h6v1h-6zM542 432h6v1h-6zM545 433h6v1h-6zM547 434h6v1h-6zM550 435h6v1h-6zM552 436h6v1h-6zM555 437h6v1h-6zM557 438h6v1h-6zM560 439h8v1h-8zM562 440h11v1h-11zM567 441h24v1h-24zM572 442h21v1h-21zM590 443h6v1h-6zM592 444h6v1h-6zM595 445h5v1h-5zM597 446h6v1h-6zM599 447h8v1h-8zM602 448h12v1h-12zM606 449h13v1h-13zM613 450h5v1h-5zM617 448h4v1h-4zM618 447h4v1h-4zM620 446h4v1h-4zM621 445h5v1h-5zM623 444h4v1h-4zM625 443h4v1h-4zM626 442h4v1h-4zM628 441h4v1h-4zM629 440h4v1h-4zM631 439h3v1h-3zM632 438h3v1h-3zM633 437h3v1h-3zM634 436h3v1h-3zM635 435h3v1h-3zM636 434h4v1h-4zM637 433h4v1h-4zM639 432h3v1h-3zM640 431h3v1h-3zM641 430h6v1h-6zM642 429h29v1h-29zM646 428h18v1h-18zM663 430h12v1h-12zM670 431h10v1h-10zM674 432h10v1h-10zM679 433h17v1h-17zM683 434h18v1h-18zM695 435h7v1h-7zM700 436h4v1h-4zM701 437h5v1h-5zM703 438h5v1h-5zM705 439h4v1h-4zM707 440h4v1h-4zM708 441h6v1h-6zM710 442h3v1h-3zM712 440h3v1h-3zM713 439h3v1h-3zM714 438h3v1h-3zM715 437h4v1h-4zM716 436h4v1h-4zM718 435h3v1h-3zM719 434h3v1h-3zM720 433h3v1h-3zM721 432h4v1h-4zM722 431h8v1h-8zM724 430h4v1h-4zM725 429h2v1h-2zM727 432h5v1h-5zM729 433h5v1h-5zM731 434h5v1h-5zM733 435h4v1h-4zM735 436h4v1h-4zM736 437h5v1h-5zM738 438h4v1h-4zM740 439h3v1h-3zM741 440h3v1h-3zM742 441h3v1h-3zM743 442h3v1h-3zM744 443h3v1h-3zM745 444h3v1h-3zM746 445h3v1h-3zM747 446h3v1h-3zM748 447h3v1h-3zM749 448h3v1h-3zM750 449h3v1h-3zM751 450h3v2h-3zM752 452h3v1h-3zM753 453h3v1h-3zM754 454h3v1h-3zM755 455h3v1h-3zM756 456h3v1h-3zM757 457h2v1h-2zM757 458h3v1h-3zM758 459h3v1h-3zM759 460h3v1h-3zM760 461h3v1h-3zM761 462h3v1h-3zM762 463h2v1h-2zM762 464h3v1h-3zM763 465h3v1h-3zM764 466h5v1h-5zM765 468h2v1h-2zM765 467h3v1h-3zM767 465h4v1h-4zM768 464h4v1h-4zM770 463h3v1h-3zM771 462h4v1h-4zM772 461h4v1h-4zM774 460h3v1h-3zM775 459h3v1h-3zM776 458h4v1h-4zM777 457h5v1h-5zM778 456h7v1h-7zM781 455h6v1h-6zM784 454h6v1h-6zM786 453h12v1h-12zM789 452h7v1h-7zM792 451h2v1h-2zM795 454h5v1h-5zM797 455h5v1h-5zM799 456h5v1h-5zM801 457h5v1h-5zM803 458h20v1h-20zM805 459h17v1h-17zM821 457h3v1h-3zM822 456h3v1h-3zM823 455h3v1h-3zM824 454h3v1h-3zM825 453h3v1h-3zM826 452h3v1h-3zM827 451h3v1h-3zM828 450h3v1h-3zM829 449h3v1h-3zM830 448h4v1h-4zM831 447h4v1h-4zM833 446h3v1h-3zM834 445h2v1h-2zM834 444h3v1h-3zM835 443h3v1h-3zM836 442h3v1h-3zM837 441h3v1h-3zM838 440h2v1h-2zM838 439h3v1h-3zM839 438h3v1h-3zM840 437h3v1h-3zM841 436h3v1h-3zM842 435h2v1h-2zM842 434h3v1h-3zM843 433h3v1h-3zM844 432h3v1h-3zM845 431h3v1h-3zM846 430h2v1h-2zM846 429h3v1h-3zM847 428h5v1h-5zM848 427h8v1h-8zM851 426h8v1h-8zM855 425h7v1h-7zM858 424h9v1h-9zM861 423h10v1h-10zM866 422h10v1h-10zM870 421h10v1h-10zM875 420h10v1h-10zM879 419h15v1h-15zM884 418h8v1h-8zM891 420h6v1h-6zM893 421h7v1h-7zM896 422h6v1h-6zM899 423h7v1h-7zM901 424h3v1h-3zM903 422h5v1h-5zM905 421h6v1h-6zM907 420h6v1h-6zM910 419h5v1h-5zM912 418h6v1h-6zM914 417h8v1h-8zM917 416h9v1h-9zM921 415h10v1h-10zM925 414h11v1h-11zM929 413h13v1h-13zM935 412h24v1h-24zM941 411h6v1h-6zM946 413h17v1h-17zM958 414h9v1h-9zM962 415h9v1h-9zM966 416h8v1h-8zM970 417h8v1h-8zM973 418h8v1h-8zM977 419h16v1h-16zM980 420h8v1h-8zM987 418h10v1h-10zM992 417h10v1h-10zM996 416h11v1h-11zM1001 415h12v1h-12zM1006 414h7v1h-7z" fill="#ff00ff"/>
<rect x="845" y="405" width="47" height="4" rx="2" fill="#fff" shape-rendering="auto"/>
<rect x="913" y="405" width="61" height="4" rx="2" fill="#fff" shape-rendering="auto"/>
<rect x="994" y="405" width="21" height="4" rx="2" fill="#fff" shape-rendering="auto"/>
<rect x="518" y="433" width="5" height="23" fill="#fff"/>
<rect x="519" y="435" width="3" height="12" fill="#ff0000"/>
<rect x="519" y="447" width="3" height="7" fill="#0000ff"/>
<path d="M521 457l5 6h-4v6h-2v-6h-4z" fill="#ff0000" shape-rendering="auto"/>
<rect x="641" y="433" width="5" height="23" fill="#fff"/>
<rect x="642" y="435" width="3" height="12" fill="#ff0000"/>
<rect x="642" y="447" width="3" height="7" fill="#0000ff"/>
<path d="M644 457l5 6h-4v6h-2v-6h-4z" fill="#ff0000" shape-rendering="auto"/>
<rect x="0" y="29" width="1111" height="1" fill="#c00000"/>
<rect x="20" y="10" width="1" height="19" fill="#c00000"/>
<rect x="795" y="9" width="1" height="20" fill="#c00000"/>
<rect x="829" y="9" width="1" height="20" fill="#c00000"/>
<rect x="864" y="9" width="1" height="20" fill="#c00000"/>
<rect x="899" y="9" width="1" height="20" fill="#c00000"/>
<rect x="934" y="9" width="1" height="20" fill="#c00000"/>
<rect x="969" y="9" width="1" height="20" fill="#c00000"/>
<rect x="1004" y="9" width="1" height="20" fill="#c00000"/>
<rect x="1039" y="9" width="1" height="20" fill="#c00000"/>
<rect x="1074" y="9" width="1" height="20" fill="#c00000"/>
<rect x="1060" y="30" width="1" height="355" fill="#c00000"/>
<rect x="0" y="385" width="1111" height="1" fill="#c00000"/>
<rect x="1060" y="386" width="51" height="1" fill="#c00000"/>
<rect x="1060" y="385" width="2" height="131" fill="#c00000"/>
<rect x="0" y="516" width="1111" height="1" fill="#c00000"/>
<rect x="1060" y="517" width="1" height="3" fill="#c00000"/>
<rect x="1111" y="9" width="1" height="511" fill="#c00000"/>
<rect x="1110" y="385" width="1" height="132" fill="#c00000"/>
<rect x="1060" y="515" width="50" height="1" fill="#c00000"/>
<rect x="1061" y="66" width="5" height="1" fill="#ff3232"/>
<rect x="1061" y="110" width="5" height="1" fill="#ff3232"/>
<rect x="1061" y="155" width="5" height="1" fill="#ff3232"/>
<rect x="1061" y="195" width="5" height="1" fill="#ff3232"/>
<rect x="1061" y="231" width="5" height="1" fill="#ff3232"/>
<rect x="1061" y="263" width="5" height="1" fill="#ff3232"/>
<rect x="1061" y="293" width="5" height="1" fill="#ff3232"/>
<rect x="1061" y="319" width="5" height="1" fill="#ff3232"/>
<rect x="1061" y="343" width="5" height="1" fill="#ff3232"/>
<rect x="1061" y="364" width="5" height="1" fill="#ff3232"/>
<rect x="1062" y="411" width="4" height="1" fill="#ff3232"/>
<rect x="1062" y="466" width="4" height="1" fill="#ff3232"/>
<rect x="1062" y="439" width="2" height="1" fill="#ff3232"/>
<rect x="1112" y="94" width="31" height="1" fill="#c00000"/>
<rect x="1112" y="278" width="31" height="1" fill="#c00000"/>
<rect x="1112" y="375" width="31" height="1" fill="#c00000"/>
<rect x="1112" y="438" width="31" height="1" fill="#c00000"/>
<rect x="1112" y="458" width="31" height="1" fill="#c00000"/>
<rect x="1112" y="481" width="31" height="1" fill="#c00000"/>
<rect x="1112" y="185" width="31" height="1" fill="#d8922a"/>
<rect x="1118.5" y="67.5" width="30" height="20" fill="none" stroke="#ff3232"/>
<rect x="2.5" y="13.5" width="11" height="10" rx="2.5" fill="none" stroke="#8a8a8a" stroke-width="1.3" shape-rendering="auto"/><rect x="9" y="15" width="3" height="7" fill="#8c8c8c"/>
<rect x="1045.5" y="34.5" width="11" height="10" rx="2.5" fill="none" stroke="#8a8a8a" stroke-width="1.3" shape-rendering="auto"/><rect x="1052" y="36" width="3" height="7" fill="#8c8c8c"/>
<path d="M1032.5 34.5L1037.5 39.5L1032.5 44.5L1027.5 39.5Z" fill="none" stroke="#808080" shape-rendering="auto"/>
<circle cx="119.0" cy="39.0" r="6" fill="#808080" shape-rendering="auto"/>
<path d="M115.0 37.5l4 4l4 -4" fill="none" stroke="#1a1a1a" stroke-width="1.4" shape-rendering="auto"/>
<circle cx="5.0" cy="394.0" r="6" fill="#808080" shape-rendering="auto"/>
<path d="M1.0 392.5l4 4l4 -4" fill="none" stroke="#1a1a1a" stroke-width="1.4" shape-rendering="auto"/>
<path d="M219 373h1v1h1v1h1v1h-5v-1h1v-1h1z" fill="#ff0000"/>
<rect x="2" y="519" width="6" height="1" fill="#808080"/>
<rect x="39" y="519" width="11" height="1" fill="#c0c0c0"/>
<rect x="61" y="519" width="1" height="1" fill="#c0c0c0"/><rect x="64" y="519" width="1" height="1" fill="#c0c0c0"/><rect x="70" y="519" width="1" height="1" fill="#c0c0c0"/><rect x="73" y="519" width="1" height="1" fill="#c0c0c0"/>
</svg>
<div class="txt">
<div class="menu">
<span class="m" style="left:6px">系统</span>
<span class="m" style="left:48px">功能</span>
<span class="m" style="left:91px">报价</span>
<span class="m" style="left:134px">分析</span>
<span class="m" style="left:177px">扩展</span>
<span class="m" style="left:220px">特色</span>
<span class="m" style="left:263px">资讯</span>
<span class="m" style="left:307px">工具</span>
<span class="m" style="left:350px">帮助</span>
<span class="tab" style="left:394px;width:41px">股票池</span>
<span class="tab" style="left:441px;width:39px">发现</span>
<span class="tab" style="left:487px;width:38px">市场</span>
<span class="m" style="left:617px;color:#f00">交易未登录&nbsp; 德明利</span>
<span class="clock" style="left:813px;width:83px">14:58:55 周二</span>
<span class="btn" style="left:904px;width:49px;color:#f00">行　情</span>
<span class="btn" style="left:957px;width:49px;color:#f00">涨停页</span>
<span class="btn" style="left:1009px;width:50px;color:#8000ff">跌停页</span>
<span class="btn" style="left:1063px;width:49px;color:#f00">撤　单</span>
<span class="btn" style="left:1115px;width:49px;color:#f00">主脑图</span>
</div>
<span class="t" style="left:25.0px;top:12.0px;color:#c0c0c0;font-size:12px;">分时</span>
<span class="t" style="left:58.0px;top:12.0px;color:#c0c0c0;font-size:12px;">1分钟</span>
<span class="t" style="left:97.0px;top:12.0px;color:#c0c0c0;font-size:12px;">5分钟</span>
<span class="t" style="left:136.5px;top:12.0px;color:#c0c0c0;font-size:12px;">15分钟</span>
<span class="t" style="left:182.0px;top:12.0px;color:#c0c0c0;font-size:12px;">30分钟</span>
<span class="t" style="left:228.0px;top:12.0px;color:#c0c0c0;font-size:12px;">60分钟</span>
<span class="t" style="left:275.0px;top:12.0px;color:#30f0ff;font-size:12px;">日线</span>
<span class="t" style="left:308.5px;top:12.0px;color:#c0c0c0;font-size:12px;">周线</span>
<span class="t" style="left:343.0px;top:12.0px;color:#c0c0c0;font-size:12px;">月线</span>
<span class="t" style="left:375.5px;top:12.0px;color:#c0c0c0;font-size:12px;">多周期</span>
<span class="t" style="left:419.0px;top:12.0px;color:#c0c0c0;font-size:12px;">更多 &gt;</span>
<span class="t" style="left:800.5px;top:12.0px;color:#c0c0c0;font-size:12px;">复权</span>
<span class="t" style="left:835.0px;top:12.0px;color:#c0c0c0;font-size:12px;">叠加</span>
<span class="t" style="left:870.0px;top:12.0px;color:#c0c0c0;font-size:12px;">多股</span>
<span class="t" style="left:905.0px;top:12.0px;color:#c0c0c0;font-size:12px;">统计</span>
<span class="t" style="left:939.5px;top:12.0px;color:#c0c0c0;font-size:12px;">画线</span>
<span class="t" style="left:977.0px;top:12.0px;color:#c0c0c0;font-size:12px;">F10</span>
<span class="t" style="left:1009.5px;top:12.0px;color:#c0c0c0;font-size:12px;">标记</span>
<span class="t" style="left:1042.5px;top:12.0px;color:#c0c0c0;font-size:12px;">+自选</span>
<span class="t" style="left:1081.0px;top:12.0px;color:#c0c0c0;font-size:12px;">返回</span>
<span class="t" style="left:-1.0px;top:32.0px;color:#c0c0c0;font-size:12px;">德明利(日线.前复权)</span>
<span class="t" style="left:129.0px;top:32.0px;color:#c0c0c0;font-size:12px;">(主散持仓线主</span>
<span class="t" style="left:210.0px;top:32.0px;color:#ffffff;font-size:12px;letter-spacing:-0.25px;">MA5: 184.47</span>
<span class="t" style="left:282.0px;top:32.0px;color:#ffff00;font-size:12px;letter-spacing:-0.1px;">MA10: 164.88</span>
<span class="t" style="left:361.0px;top:32.0px;color:#ff00ff;font-size:12px;letter-spacing:-0.2px;">MA20: 132.99</span>
<span class="t" style="left:440.3px;top:32.0px;color:#00ff00;font-size:12px;letter-spacing:-0.3px;">MA60: 104.01</span>
<span class="t" style="left:-1.0px;top:46.0px;color:#c0c0c0;font-size:12px;">2025/09/30/二</span>
<span class="t" style="left:78.0px;top:46.0px;color:#ff3232;font-size:12px;">开200.00</span>
<span class="t" style="left:130.5px;top:46.0px;color:#ff3232;font-size:12px;">高204.69</span>
<span class="t" style="left:183.5px;top:46.0px;color:#ff3232;font-size:12px;">低198.00</span>
<span class="t" style="left:236.5px;top:46.0px;color:#ff3232;font-size:12px;">收204.69</span>
<span class="t" style="left:289.5px;top:46.0px;color:#ffff00;font-size:12px;">量62653</span>
<span class="t" style="left:339.5px;top:46.0px;color:#c0c0c0;font-size:12px;">额12.7亿</span>
<span class="t" style="left:390.5px;top:46.0px;color:#ff3232;font-size:12px;letter-spacing:0.2px;">幅18.61(10.00%)</span>
<span class="t" style="left:487.0px;top:46.0px;color:#c0c0c0;font-size:12px;">换3.92%</span>
<span class="t" style="left:536.0px;top:46.0px;color:#c0c0c0;font-size:12px;">流通1.60亿</span>
<span class="t" style="left:599.5px;top:46.0px;color:#e0e000;font-size:12px;">集成电路设计</span>
<span class="t" style="left:951.0px;top:65.0px;color:#d0d0d0;font-size:12px;">204.69</span>
<span class="t" style="left:1004.0px;top:105.0px;color:#d0d0d0;font-size:12px;width:55px;overflow:hidden;">189.53 - 1</span>
<span class="t" style="left:937.0px;top:188.0px;color:#d0d0d0;font-size:12px;">155.11 - 159.81</span>
<span class="t" style="left:923.0px;top:221.3px;color:#d0d0d0;font-size:12px;letter-spacing:0.1px;">141.01 - 148.00</span>
<span class="t" style="left:343.0px;top:361.0px;color:#c0c0c0;font-size:12px;">78.79</span>
<span class="t" style="left:216.2px;top:374.3px;color:#ff0000;font-size:10px;font-weight:bold;">S</span>
<span class="mk" style="left:636px;top:371px;background:#0c3c78">财</span>
<span class="mk" style="left:732px;top:371px;background:#c4500c">激</span>
<span class="mk" style="left:910px;top:371px;background:#008000">减</span>
<span class="mk" style="left:936px;top:371px;background:#a0500c">榜</span>
<span class="mk" style="left:1004px;top:371px;background:#800000">涨</span>
<span class="t" style="left:1075.5px;top:59.5px;color:#ff3232;font-size:12px;">204.7</span>
<span class="t" style="left:1075.5px;top:103.5px;color:#ff3232;font-size:12px;">186.1</span>
<span class="t" style="left:1075.5px;top:148.5px;color:#ff3232;font-size:12px;">167.5</span>
<span class="t" style="left:1075.5px;top:188.5px;color:#ff3232;font-size:12px;">150.7</span>
<span class="t" style="left:1075.5px;top:224.5px;color:#ff3232;font-size:12px;">135.7</span>
<span class="t" style="left:1075.5px;top:256.5px;color:#ff3232;font-size:12px;">122.1</span>
<span class="t" style="left:1075.5px;top:286.5px;color:#ff3232;font-size:12px;">109.9</span>
<span class="t" style="left:1075.5px;top:312.5px;color:#ff3232;font-size:12px;">98.89</span>
<span class="t" style="left:1075.5px;top:336.5px;color:#ff3232;font-size:12px;">89.00</span>
<span class="t" style="left:1075.5px;top:357.5px;color:#ff3232;font-size:12px;">80.10</span>
<span class="t" style="left:1075.5px;top:404.5px;color:#ff3232;font-size:12px;">100.0</span>
<span class="t" style="left:1075.5px;top:433.5px;color:#ff3232;font-size:12px;">75.00</span>
<span class="t" style="left:1075.5px;top:459.5px;color:#ff3232;font-size:12px;">50.00</span>
<span class="t" style="left:15.0px;top:387.0px;color:#c0c0c0;font-size:12px;">突破张停颈线F</span>
<span class="t" style="left:99.0px;top:387.0px;color:#ff00ff;font-size:12px;">主力持仓: 96.95</span>
<span class="t" style="left:190.0px;top:387.0px;color:#00ff00;font-size:12px;letter-spacing:-0.2px;">小散持仓: 8.97</span>
<span class="t" style="left:272.0px;top:387.0px;color:#ffff00;font-size:12px;">强弱分界线: 70.00</span>
<span class="t" style="left:374.0px;top:387.0px;color:#e0e0e0;font-size:12px;">: 105.00</span>
<span class="t" style="left:1113.5px;top:12.5px;color:#ffff00;font-size:18px;width:30px;overflow:hidden;height:24px;line-height:24px;">德明利</span>
<span class="t" style="left:1114.0px;top:44.0px;color:#ff3232;font-size:18px;font-weight:bold;width:29px;overflow:hidden;">204.69</span>
<span class="t" style="left:1130.0px;top:70.0px;color:#ff3232;font-size:14px;width:13px;overflow:hidden;">买入</span>
<span class="t" style="left:1119.5px;top:136.5px;color:#ff3232;font-size:17px;font-family:'Liberation Sans','Noto Sans CJK SC',sans-serif;font-weight:bold;width:23px;overflow:hidden;">首板</span>
<span class="t" style="left:1113.5px;top:186.7px;color:#c0c0c0;font-size:17px;width:30px;overflow:hidden;height:20px;line-height:20px;letter-spacing:-1px;">买一</span>
<span class="t" style="left:1113.5px;top:204.8px;color:#c0c0c0;font-size:17px;width:30px;overflow:hidden;height:20px;line-height:20px;letter-spacing:-1px;">买二</span>
<span class="t" style="left:1113.5px;top:222.9px;color:#c0c0c0;font-size:17px;width:30px;overflow:hidden;height:20px;line-height:20px;letter-spacing:-1px;">买三</span>
<span class="t" style="left:1113.5px;top:241.0px;color:#c0c0c0;font-size:17px;width:30px;overflow:hidden;height:20px;line-height:20px;letter-spacing:-1px;">买四</span>
<span class="t" style="left:1113.5px;top:259.1px;color:#c0c0c0;font-size:17px;width:30px;overflow:hidden;height:20px;line-height:20px;letter-spacing:-1px;">买五</span>
<span class="t" style="left:1113.5px;top:279.0px;color:#c0c0c0;font-size:17px;width:30px;overflow:hidden;height:20px;line-height:20px;letter-spacing:-1px;">涨停</span>
<span class="t" style="left:1113.5px;top:298.0px;color:#c0c0c0;font-size:17px;width:30px;overflow:hidden;height:20px;line-height:20px;letter-spacing:-1px;">最高</span>
<span class="t" style="left:1113.5px;top:317.0px;color:#c0c0c0;font-size:17px;width:30px;overflow:hidden;height:20px;line-height:20px;letter-spacing:-1px;">最低</span>
<span class="t" style="left:1113.5px;top:336.0px;color:#c0c0c0;font-size:17px;width:30px;overflow:hidden;height:20px;line-height:20px;letter-spacing:-1px;">现量</span>
<span class="t" style="left:1113.5px;top:355.0px;color:#c0c0c0;font-size:17px;width:30px;overflow:hidden;height:20px;line-height:20px;letter-spacing:-1px;">外盘</span>
<span class="t" style="left:1113.5px;top:376.8px;color:#c0c0c0;font-size:17px;width:30px;overflow:hidden;height:20px;line-height:20px;letter-spacing:-1px;">换手</span>
<span class="t" style="left:1113.5px;top:395.8px;color:#c0c0c0;font-size:17px;width:30px;overflow:hidden;height:20px;line-height:20px;letter-spacing:-1px;">净资</span>
<span class="t" style="left:1113.5px;top:414.6px;color:#c0c0c0;font-size:17px;width:30px;overflow:hidden;height:20px;line-height:20px;letter-spacing:-1px;">收益</span>
<span class="t" style="left:1113.5px;top:439.4px;color:#c0c0c0;font-size:17px;width:30px;overflow:hidden;height:20px;line-height:20px;letter-spacing:-1px;">交易</span>
<span class="t" style="left:1113.5px;top:459.4px;color:#c0c0c0;font-size:17px;width:30px;overflow:hidden;height:20px;line-height:20px;letter-spacing:-1px;">主力</span>
<span class="t" style="left:1114.0px;top:484.0px;color:#e8e8e8;font-size:13px;font-weight:bold;width:29px;overflow:hidden;">14:58</span>
</div>
</body></html>
